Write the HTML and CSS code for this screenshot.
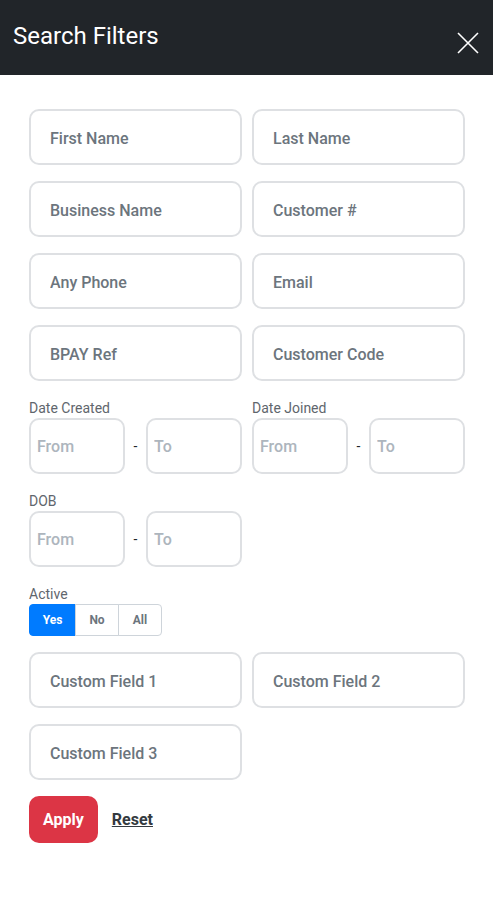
FILE: index.html
```html
<!DOCTYPE html>
<html lang="en">
<head>
  <meta charset="UTF-8">
  <meta name="viewport" content="width=device-width, initial-scale=1.0">
  <title>Search Filters</title>
  <link rel="stylesheet" href="styles.css">
</head>
<body>
  <!-- Header -->
  <header class="panel-header">
    <h1>Search Filters</h1>
    <button class="close-btn" aria-label="Close">
      <svg width="22" height="22" viewBox="0 0 22 22">
        <path d="M1 1 L21 21 M21 1 L1 21" stroke="#fff" stroke-width="1.6" fill="none"/>
      </svg>
    </button>
  </header>

  <!-- Filter Form -->
  <form class="filters">
    <div class="field-grid">
      <input class="field" type="text" placeholder="First Name">
      <input class="field" type="text" placeholder="Last Name">
      <input class="field" type="text" placeholder="Business Name">
      <input class="field" type="text" placeholder="Customer #">
      <input class="field" type="text" placeholder="Any Phone">
      <input class="field" type="text" placeholder="Email">
      <input class="field" type="text" placeholder="BPAY Ref">
      <input class="field" type="text" placeholder="Customer Code">
    </div>

    <div class="field-grid">
      <div class="range-group">
        <label>Date Created</label>
        <div class="range">
          <input class="date" type="text" placeholder="From">
          <span class="dash">-</span>
          <input class="date" type="text" placeholder="To">
        </div>
      </div>
      <div class="range-group">
        <label>Date Joined</label>
        <div class="range">
          <input class="date" type="text" placeholder="From">
          <span class="dash">-</span>
          <input class="date" type="text" placeholder="To">
        </div>
      </div>
    </div>

    <div class="field-grid">
      <div class="range-group">
        <label>DOB</label>
        <div class="range">
          <input class="date" type="text" placeholder="From">
          <span class="dash">-</span>
          <input class="date" type="text" placeholder="To">
        </div>
      </div>
    </div>

    <div class="range-group">
      <label>Active</label>
      <div class="btn-group">
        <button type="button" class="toggle active">Yes</button>
        <button type="button" class="toggle">No</button>
        <button type="button" class="toggle">All</button>
      </div>
    </div>

    <div class="field-grid">
      <input class="field" type="text" placeholder="Custom Field 1">
      <input class="field" type="text" placeholder="Custom Field 2">
      <input class="field" type="text" placeholder="Custom Field 3">
    </div>

    <div class="form-actions">
      <button type="submit" class="apply-btn">Apply</button>
      <a href="#" class="reset-link">Reset</a>
    </div>
  </form>
</body>
</html>
```

FILE: styles.css
```css
/* General Styles */
body {
  font-family: Roboto, 'Liberation Sans', sans-serif;
  background: #fff;
  color: #212529;
  margin: 0;
  padding: 0;
}

/* Header */
.panel-header {
  background: #212529;
  height: 75px;
  box-sizing: border-box;
  padding: 22px 14px 0 13px;
  display: flex;
  justify-content: space-between;
  align-items: flex-start;
}

.panel-header h1 {
  margin: 0;
  font-size: 24px;
  font-weight: 400;
  line-height: 1.2;
  color: #fff;
}

.close-btn {
  background: none;
  border: none;
  padding: 0;
  margin-top: 10px;
  width: 22px;
  height: 22px;
  cursor: pointer;
}

.close-btn svg {
  display: block;
}

/* Form */
.filters {
  padding: 34px 28px 40px 29px;
  display: flex;
  flex-direction: column;
  gap: 16px;
}

.field-grid {
  display: grid;
  grid-template-columns: 1fr 1fr;
  column-gap: 10px;
  row-gap: 16px;
}

.field,
.date {
  box-sizing: border-box;
  height: 56px;
  width: 100%;
  border: 2px solid #dee0e3;
  border-radius: 10px;
  background: #fff;
  font-family: inherit;
  font-size: 16px;
  font-weight: 500;
  outline: none;
}

.field {
  padding: 2px 19px 0;
}

.field::placeholder {
  color: #6c757d;
}

.date {
  padding: 1px 6px 0;
}

.date::placeholder {
  color: #adb5bd;
}

/* Date ranges */
.range-group label {
  display: block;
  font-size: 14px;
  line-height: 18px;
  padding-top: 2px;
  color: #5f666d;
  margin-bottom: 1px;
}

.range {
  display: flex;
  align-items: center;
}

.range .date {
  width: 96px;
  flex: none;
}

.dash {
  flex: 1;
  text-align: center;
  font-size: 14px;
  color: #212529;
}

/* Active toggle */
.btn-group {
  display: flex;
}

.toggle {
  height: 32px;
  width: 44px;
  padding: 0;
  border: 1px solid #ced4da;
  background: #fff;
  color: #6c757d;
  font-family: inherit;
  font-size: 12px;
  font-weight: 700;
  cursor: pointer;
}

.toggle + .toggle {
  margin-left: -1px;
}

.toggle:first-child {
  width: 47px;
  border-radius: 4px 0 0 4px;
}

.toggle:last-child {
  border-radius: 0 4px 4px 0;
}

.toggle.active {
  background: #007bff;
  border-color: #007bff;
  color: #fff;
}

/* Actions */
.form-actions {
  display: flex;
  align-items: center;
  gap: 14px;
}

.apply-btn {
  height: 47px;
  padding: 0 14px;
  border: none;
  border-radius: 10px;
  background: #dc3545;
  color: #fff;
  font-family: inherit;
  font-size: 16px;
  font-weight: 700;
  cursor: pointer;
}

.reset-link {
  color: #343a40;
  font-size: 16px;
  font-weight: 700;
  text-decoration: underline;
}
```
